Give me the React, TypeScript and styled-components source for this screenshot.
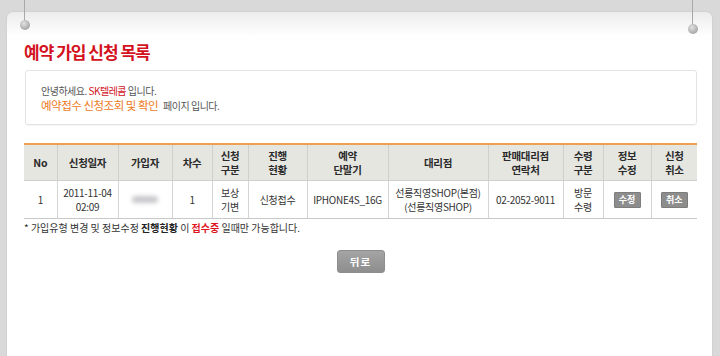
import React from "react";
import styled, { createGlobalStyle } from "styled-components";

const Global = createGlobalStyle`
  html, body { margin: 0; padding: 0; }
  body {
    background: #d9d9d9;
    font-family: "Noto Sans CJK KR", "Noto Sans", sans-serif;
    overflow: hidden;
  }
`;

const Page = styled.div`
  position: relative;
  height: 356px;
  padding: 12px 8px 0 7px;
  box-sizing: border-box;
`;

const Panel = styled.div`
  height: 344px;
  background: linear-gradient(#ececec 0px, #ffffff 24px);
  border-radius: 6px 6px 0 0;
  box-shadow: 0 0 2px rgba(0, 0, 0, 0.12);
  padding: 30px 15px 0 17px;
  box-sizing: border-box;
  display: flex;
  flex-direction: column;
`;

const Pin = styled.div<{ $x: number; $y: number }>`
  position: absolute;
  left: ${(p) => p.$x - 5}px;
  top: 0;
  width: 10px;
  height: ${(p) => p.$y + 5}px;
  &::before {
    content: "";
    position: absolute;
    left: 4px;
    top: 0;
    width: 1px;
    height: ${(p) => p.$y - 2}px;
    background: #a8a8a8;
  }
  &::after {
    content: "";
    position: absolute;
    left: 0;
    top: ${(p) => p.$y - 5}px;
    width: 10px;
    height: 10px;
    border-radius: 50%;
    background: radial-gradient(circle at 40% 35%, #e2e2e2 0%, #b4b4b4 55%, #979797 100%);
  }
`;

const Title = styled.h1`
  margin: 0;
  font-size: 17px;
  line-height: 20px;
  font-weight: 700;
  color: #d3121e;
  letter-spacing: -1px;
`;

const InfoBox = styled.div`
  margin: 8px 0 0 1px;
  border: 1px solid #e3e3e3;
  border-radius: 3px;
  padding: 12px 15px 11px;
  box-shadow: 0 1px 1px rgba(0, 0, 0, 0.04);
`;

const InfoLine = styled.div`
  font-size: 10px;
  line-height: 15px;
  color: #555;
  letter-spacing: -0.5px;
  white-space: nowrap;
`;

const Red = styled.span`
  color: #d3121e;
`;

const Orange = styled.span`
  color: #ec7a1c;
  font-size: 11.5px;
  letter-spacing: -0.5px;
  margin-right: 5px;
`;

const Table = styled.table`
  margin-top: 18px;
  width: 673px;
  border-collapse: collapse;
  table-layout: fixed;
  border-top: 2px solid #ee9f4f;
  color: #333;
  font-size: 10px;
  letter-spacing: -0.3px;
`;

const Th = styled.th`
  background: #e6e6e1;
  height: 35px;
  font-weight: 700;
  font-size: 10.5px;
  line-height: 14px;
  color: #2a2a2a;
  border-left: 1px solid #cfcfcb;
  border-bottom: 1px solid #cfcfcb;
  padding: 0;
  &:first-child { border-left: none; }
`;

const Td = styled.td`
  height: 37px;
  text-align: center;
  line-height: 14px;
  border-left: 1px solid #d5d5d5;
  border-bottom: 1px solid #c8c8c8;
  padding: 0;
  &:first-child { border-left: none; }
`;

const Blur = styled.div`
  width: 26px;
  height: 7px;
  margin: 0 auto;
  background: #c8c8cc;
  border-radius: 4px;
  filter: blur(2px);
`;

const SmallBtn = styled.span`
  display: inline-block;
  width: 25px;
  height: 14px;
  line-height: 14px;
  background: #8d8d8d;
  border: 1px solid #7d7d7d;
  border-radius: 1px;
  color: #fff;
  font-size: 9px;
  font-weight: 700;
  text-align: center;
  letter-spacing: 0;
`;

const Note = styled.p`
  margin: 2px 0 0;
  font-size: 10px;
  line-height: 14px;
  color: #333;
  letter-spacing: 0;
`;

const Bold = styled.b<{ $red?: boolean }>`
  color: ${(p) => (p.$red ? "#e0141e" : "#222")};
`;

const BackRow = styled.div`
  display: flex;
  justify-content: center;
  margin-top: 15px;
`;

const BackBtn = styled.button`
  width: 48px;
  height: 23px;
  border: 1px solid #8e8e8e;
  border-radius: 3px;
  background: linear-gradient(#a4a4a4, #8e8e8e);
  color: #fff;
  font-family: inherit;
  font-size: 10.5px;
  font-weight: 700;
  letter-spacing: 1px;
  padding: 0;
  cursor: pointer;
`;

const cols = [33, 61, 54, 40, 36, 59, 81, 100, 75, 40, 48, 46];

const headers: React.ReactNode[] = [
  "No",
  "신청일자",
  "가입자",
  "차수",
  <>신청<br />구분</>,
  <>진행<br />현황</>,
  <>예약<br />단말기</>,
  "대리점",
  <>판매대리점<br />연락처</>,
  <>수령<br />구분</>,
  <>정보<br />수정</>,
  <>신청<br />취소</>,
];

export default function App() {
  return (
    <>
      <Global />
      <Page>
        <Pin $x={25} $y={25} />
        <Pin $x={693} $y={29} />
        <Panel>
          <Title>예약 가입 신청 목록</Title>
          <InfoBox>
            <InfoLine>
              안녕하세요. <Red>SK텔레콤</Red> 입니다.
            </InfoLine>
            <InfoLine>
              <Orange>예약접수 신청조회 및 확인</Orange>페이지 입니다.
            </InfoLine>
          </InfoBox>
          <Table>
            <colgroup>
              {cols.map((w, i) => (
                <col key={i} style={{ width: w }} />
              ))}
            </colgroup>
            <thead>
              <tr>
                {headers.map((h, i) => (
                  <Th key={i}>{h}</Th>
                ))}
              </tr>
            </thead>
            <tbody>
              <tr>
                <Td>1</Td>
                <Td>
                  2011-11-04
                  <br />
                  02:09
                </Td>
                <Td>
                  <Blur />
                </Td>
                <Td>1</Td>
                <Td>
                  보상
                  <br />
                  기변
                </Td>
                <Td>신청접수</Td>
                <Td>IPHONE4S_16G</Td>
                <Td>
                  선릉직영SHOP(본점)
                  <br />
                  (선릉직영SHOP)
                </Td>
                <Td>02-2052-9011</Td>
                <Td>
                  방문
                  <br />
                  수령
                </Td>
                <Td>
                  <SmallBtn>수정</SmallBtn>
                </Td>
                <Td>
                  <SmallBtn>취소</SmallBtn>
                </Td>
              </tr>
            </tbody>
          </Table>
          <Note>
            * 가입유형 변경 및 정보수정 <Bold>진행현황</Bold> 이 <Bold $red>접수중</Bold> 일때만 가능합니다.
          </Note>
          <BackRow>
            <BackBtn>뒤로</BackBtn>
          </BackRow>
        </Panel>
      </Page>
    </>
  );
}
